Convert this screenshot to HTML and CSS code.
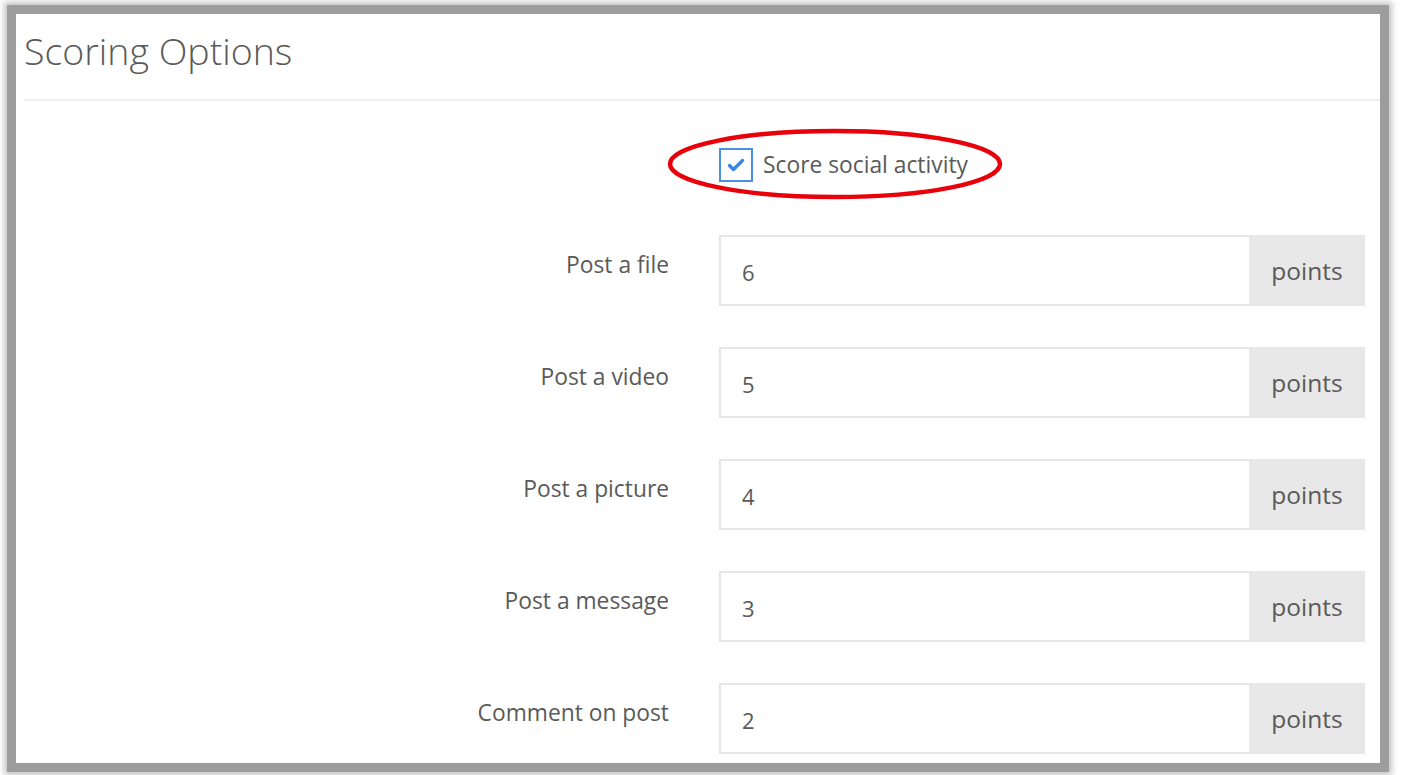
FILE: index.html
```html
<!DOCTYPE html>
<html>
<head>
<meta charset="utf-8">
<link rel="stylesheet" href="styles.css">
</head>
<body>
<div class="panel">
  <div class="header"><h1 class="title">Scoring Options</h1></div>
  <div class="form">
    <div class="check-row">
      <span class="spacer"></span>
      <div class="check-cell">
        <span class="box">
          <svg width="20" height="16" viewBox="0 0 20 16"><path d="M3.5 8.5 L7.5 12.5 L16.5 3.5" fill="none" stroke="#3d86e0" stroke-width="3.4" stroke-linecap="round" stroke-linejoin="round"/></svg>
        </span>
        <span class="check-label">Score social activity</span>
        <svg class="ellipse" width="340" height="74" viewBox="0 0 340 74"><ellipse cx="169" cy="37" rx="165" ry="33" fill="none" stroke="#e8000b" stroke-width="4.5"/></svg>
      </div>
    </div>
    <div class="row"><label class="lbl">Post a file</label><div class="group"><div class="input">6</div><div class="addon">points</div></div></div>
    <div class="row"><label class="lbl">Post a video</label><div class="group"><div class="input">5</div><div class="addon">points</div></div></div>
    <div class="row"><label class="lbl">Post a picture</label><div class="group"><div class="input">4</div><div class="addon">points</div></div></div>
    <div class="row"><label class="lbl">Post a message</label><div class="group"><div class="input">3</div><div class="addon">points</div></div></div>
    <div class="row"><label class="lbl">Comment on post</label><div class="group"><div class="input">2</div><div class="addon">points</div></div></div>
  </div>
</div>
</body>
</html>
```

FILE: styles.css
```css
html, body {
  margin: 0;
  padding: 0;
  background: #ffffff;
  width: 1406px;
  height: 775px;
  overflow: hidden;
}

body {
  font-family: "Open Sans", "Liberation Sans", sans-serif;
  color: #5a5a5a;
  padding-top: 14px;
  padding-left: 16px;
  box-sizing: border-box;
}

.panel {
  width: 1364px;
  height: 749px;
  background: #ffffff;
  box-shadow: 0 0 0 9px #9d9d9d, 0 0 6px 12px #c4c4c4;
  overflow: hidden;
}

.header {
  margin-left: 8px;
  height: 85px;
  border-bottom: 2px solid #eeeeee;
}

.title {
  margin: 0;
  padding-top: 15px;
  font-size: 37.5px;
  font-weight: 300;
  line-height: 44px;
  color: #5a5a5a;
}

.form {
  display: flex;
  flex-direction: column;
  gap: 41px;
}

.check-row,
.row {
  display: grid;
  grid-template-columns: 653px 646px;
  column-gap: 50px;
}

.check-row {
  margin-top: 46px;
  margin-bottom: 12px;
}

.check-cell {
  position: relative;
  display: flex;
  align-items: center;
  gap: 10px;
  height: 35px;
}

.box {
  width: 30px;
  height: 30px;
  border: 2.5px solid #4a8fe3;
  display: flex;
  align-items: center;
  justify-content: center;
  background: #fff;
}

.check-label {
  font-size: 22.8px;
  color: #5a5a5a;
}

.ellipse {
  position: absolute;
  left: -53px;
  top: -20px;
}

.lbl {
  text-align: right;
  font-size: 22.8px;
  line-height: 30px;
  padding-top: 15px;
  color: #5a5a5a;
}

.group {
  display: flex;
  height: 71px;
}

.input {
  flex: 1;
  border: 2px solid #e6e6e6;
  border-right: none;
  box-sizing: border-box;
  padding-left: 21px;
  display: flex;
  align-items: center;
  padding-top: 2px;
  font-size: 22px;
  color: #5a5a5a;
}

.addon {
  width: 116px;
  background: #e8e8e8;
  display: flex;
  align-items: center;
  justify-content: center;
  font-size: 24.5px;
  color: #5a5a5a;
}
```
